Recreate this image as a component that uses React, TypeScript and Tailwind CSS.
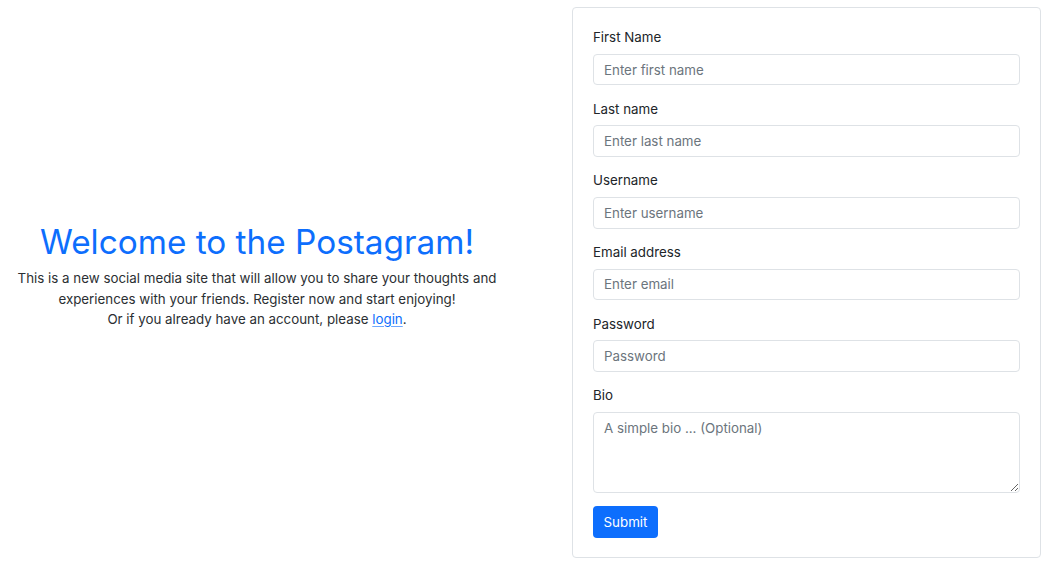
import React from "react";

const fields = [
  { label: "First Name", placeholder: "Enter first name", type: "text" },
  { label: "Last name", placeholder: "Enter last name", type: "text" },
  { label: "Username", placeholder: "Enter username", type: "text" },
  { label: "Email address", placeholder: "Enter email", type: "email" },
  { label: "Password", placeholder: "Password", type: "password" },
];

export default function App() {
  return (
    <div
      className="flex h-[565px] w-[1049px] items-center bg-white text-[13.33px] text-[#212529]"
      style={{ fontFamily: "Inter, 'Noto Sans', sans-serif" }}
    >
      <div className="flex w-[514px] flex-col items-center text-center">
        <h1 className="text-[33.33px] leading-[40px] text-[#0d6efd]">Welcome to the Postagram!</h1>
        <p className="mb-[13.33px] mt-[6px] leading-[20.5px] text-[#2b2f33]">
          This is a new social media site that will allow you to share your thoughts and
          <br />
          experiences with your friends. Register now and start enjoying!
          <br />
          Or if you already have an account, please{" "}
          <a href="#" className="text-[#0d6efd] underline decoration-[#0d6efd]/60 underline-offset-2">login</a>.
        </p>
      </div>
      <div className="ml-[58px] w-[469px] rounded-[4px] border border-[#dee2e6] px-[20px] pb-[19px] pt-[19px]">
        {fields.map((f) => (
          <div key={f.label} className="mb-[13.33px]">
            <label className="mb-[6.67px] block leading-[20px]">{f.label}</label>
            <input
              type={f.type}
              placeholder={f.placeholder}
              className="block h-[31.67px] w-full rounded-[4px] border border-[#dee2e6] px-[10px] text-[13.33px] placeholder:text-[#6c757d] focus:outline-none"
            />
          </div>
        ))}
        <div>
          <label className="mb-[6.67px] block leading-[20px]">Bio</label>
          <textarea
            placeholder="A simple bio ... (Optional)"
            className="block h-[81px] w-full rounded-[4px] border border-[#dee2e6] px-[10px] py-[5px] text-[13.33px] leading-[20px] placeholder:text-[#6c757d] focus:outline-none"
          />
        </div>
        <button className="mt-[13.33px] h-[31.67px] w-[65px] rounded-[4px] bg-[#0d6efd] pt-[1px] text-[13.33px] text-white">
          Submit
        </button>
      </div>
    </div>
  );
}
